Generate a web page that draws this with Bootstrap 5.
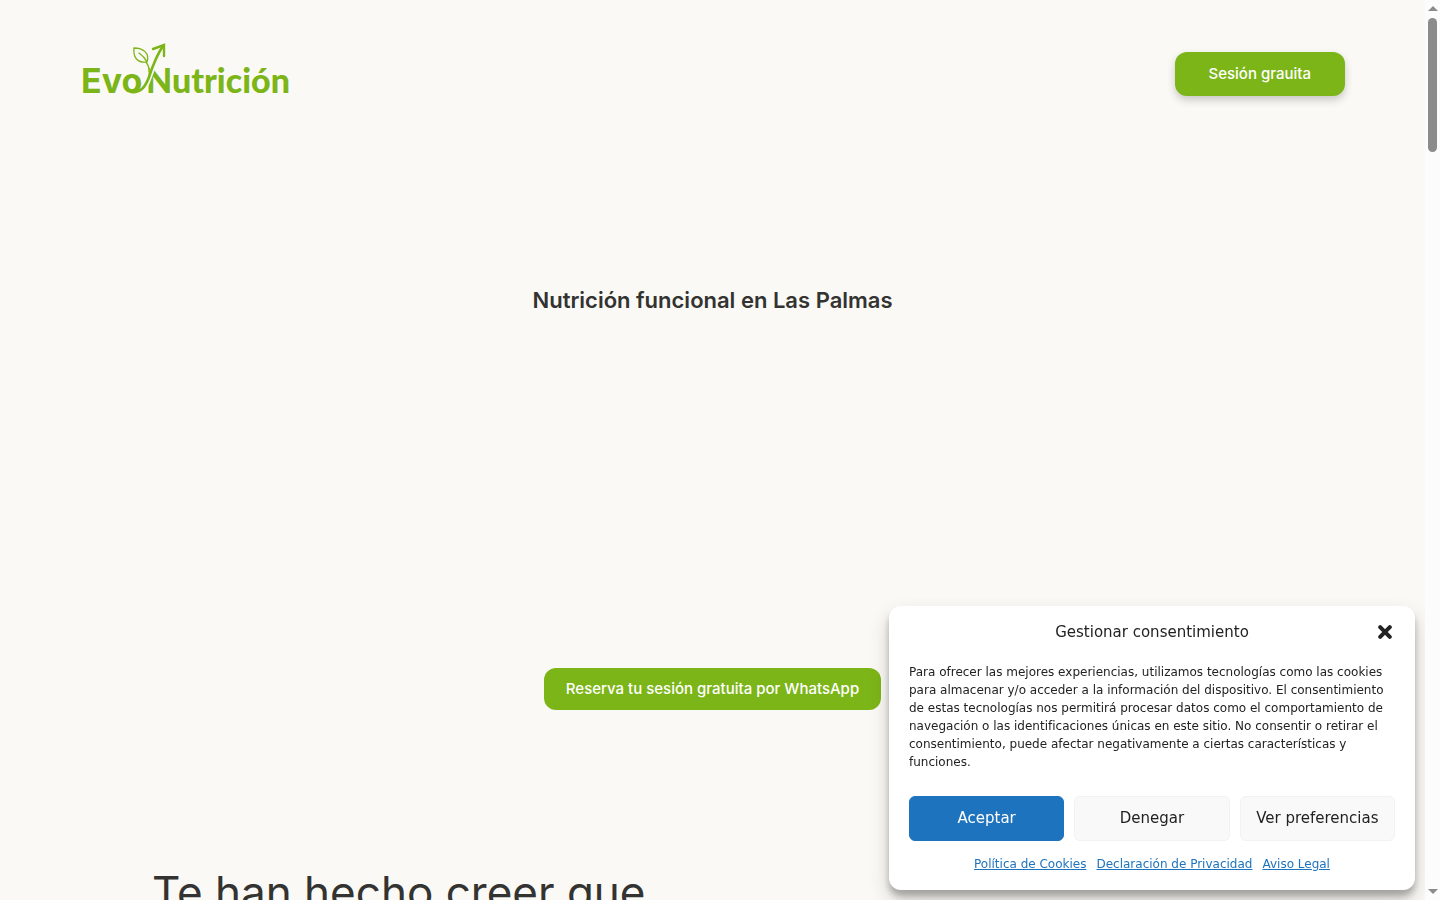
<!DOCTYPE html>
<html lang="es">
<head>
<meta charset="utf-8">
<meta name="viewport" content="width=device-width, initial-scale=1">
<title>EvoNutrición</title>
<link href="https://cdn.jsdelivr.net/npm/bootstrap@5.3.0/dist/css/bootstrap.min.css" rel="stylesheet">
<style>
:root { --evo-green: #7cb518; --evo-ink: #333331; --evo-bg: #fbf9f5; }
body { font-family: Inter, sans-serif; background: var(--evo-bg); color: var(--evo-ink); }
.page-view { min-width: 0; }
.site-header { padding: 40px 80px 44px; }
.site-logo { width: 212px; height: 60px; }
.site-logo text { font: 900 34px Lato, sans-serif; fill: var(--evo-green); }
.site-logo .logo-evo { font: 700 34px Inter, sans-serif; }
.btn-evo { --bs-btn-color: #fff; --bs-btn-bg: var(--evo-green); --bs-btn-hover-color: #fff; --bs-btn-hover-bg: #6aa010; --bs-btn-border-width: 0; --bs-btn-border-radius: 12px; --bs-btn-font-weight: 500; --bs-btn-font-size: 15px; --bs-btn-line-height: 24px; }
.btn-session { --bs-btn-padding-x: 34px; --bs-btn-padding-y: 10px; margin-top: 12px; box-shadow: 0 4px 8px rgba(0,0,0,.2); }
.btn-whatsapp { --bs-btn-padding-x: 22px; --bs-btn-padding-y: 9px; }
.hero { padding-top: 140px; gap: 352px; }
.hero h1 { font-size: 22px; line-height: 32px; font-weight: 600; }
.belief { padding: 152px 152px 0; }
.belief h2 { font-size: 44px; line-height: 60px; font-weight: 400; }
.consent { right: 25px; bottom: 10px; width: 526px; padding: 14px 20px 17px; border-radius: 12px; background: #fff; color: #222; font-family: "DejaVu Sans", sans-serif; font-size: 12px; line-height: 18px; box-shadow: 0 10px 20px rgba(0,0,0,.19), 0 6px 6px rgba(0,0,0,.23); }
.consent h2 { font-size: 15px; line-height: 24px; font-weight: 400; }
.consent p { margin: 19px 0 25px; }
.consent-close { right: 0; top: 2px; width: 20px; height: 20px; }
.consent-actions { gap: 10px; }
.consent-actions .btn { flex: 1 1 0; --bs-btn-font-size: 15px; --bs-btn-line-height: 23px; --bs-btn-padding-x: 0; --bs-btn-padding-y: 10px; --bs-btn-border-radius: 6px; }
.btn-accept { --bs-btn-color: #fff; --bs-btn-bg: #1e73be; --bs-btn-border-color: #1e73be; --bs-btn-hover-color: #fff; --bs-btn-hover-bg: #185f9e; }
.btn-plain { --bs-btn-color: #222; --bs-btn-bg: #f9f9f9; --bs-btn-border-color: #f2f2f2; --bs-btn-hover-bg: #eee; }
.consent-links { gap: 10px; margin-top: 14px; }
.consent a { color: #1e73be; }
.scroll-rail { width: 15px; background: #fcfcfc; padding: 6px 0; }
.scroll-thumb { width: 9px; height: 134px; margin-top: 7px; border-radius: 5px; background: #8b8b8b; }
</style>
</head>
<body class="d-flex vh-100 overflow-hidden">
<div class="page-view flex-grow-1 overflow-hidden">
  <header class="site-header d-flex justify-content-between align-items-start">
    <a href="#" aria-label="EvoNutrición">
      <svg class="site-logo d-block overflow-visible" viewBox="0 0 212 60">
        <text class="logo-evo" x="1" y="53">Evo</text>
        <text x="66" y="53">Nutrición</text>
        <path d="M80 10C76 19 73 28 69 38C67 44 65 48 62 51" fill="none" stroke="#fbf9f5" stroke-width="5"/>
        <g fill="none" stroke="#7cb518" stroke-linecap="round">
          <path stroke-width="2.6" d="M83 6C76 16 72 28 69 37C65 48 60 53 51 52"/>
          <path stroke-width="2.4" d="M73 9L84 5L84 16"/>
          <path stroke-width="1.3" d="M69 37C70 31 69 26 66 22C57 23 53 17 54 8C63 8 70 13 67 22M59 13C62 15 65 18 67 22"/>
        </g>
      </svg>
    </a>
    <button type="button" class="btn btn-evo btn-session">Sesión grauita</button>
  </header>
  <main>
    <section class="hero d-flex flex-column align-items-center">
      <h1 class="m-0 text-center">Nutrición funcional en Las Palmas</h1>
      <a href="#" class="btn btn-evo btn-whatsapp">Reserva tu sesión gratuita por WhatsApp</a>
    </section>
    <section class="belief">
      <h2 class="m-0">Te han hecho creer que</h2>
    </section>
  </main>
</div>
<div class="scroll-rail d-flex flex-column align-items-center flex-shrink-0 position-relative z-3" aria-hidden="true">
  <svg width="10" height="5"><path d="M0 5L5 0L10 5Z" fill="#8b8b8b"/></svg>
  <div class="scroll-thumb"></div>
  <svg class="mt-auto" width="10" height="5"><path d="M0 0L5 5L10 0Z" fill="#8b8b8b"/></svg>
</div>
<section class="consent position-fixed" role="dialog" aria-labelledby="consent-title">
  <div class="position-relative text-center">
    <h2 class="m-0" id="consent-title">Gestionar consentimiento</h2>
    <button type="button" class="consent-close btn p-0 border-0 position-absolute d-flex align-items-center justify-content-center" aria-label="Cerrar">
      <svg width="14" height="14" viewBox="0 0 14 14"><path d="M2.2 2.2L11.8 11.8M11.8 2.2L2.2 11.8" stroke="#222" stroke-width="4" stroke-linecap="round"/></svg>
    </button>
  </div>
  <p>Para ofrecer las mejores experiencias, utilizamos tecnologías como las cookies para almacenar y/o acceder a la información del dispositivo. El consentimiento de estas tecnologías nos permitirá procesar datos como el comportamiento de navegación o las identificaciones únicas en este sitio. No consentir o retirar el consentimiento, puede afectar negativamente a ciertas características y funciones.</p>
  <div class="consent-actions d-flex">
    <button type="button" class="btn btn-accept">Aceptar</button>
    <button type="button" class="btn btn-plain">Denegar</button>
    <button type="button" class="btn btn-plain">Ver preferencias</button>
  </div>
  <nav class="consent-links d-flex justify-content-center">
    <a href="#">Política de Cookies</a>
    <a href="#">Declaración de Privacidad</a>
    <a href="#">Aviso Legal</a>
  </nav>
</section>
<script src="https://cdn.jsdelivr.net/npm/bootstrap@5.3.0/dist/js/bootstrap.bundle.min.js"></script>
</body>
</html>
